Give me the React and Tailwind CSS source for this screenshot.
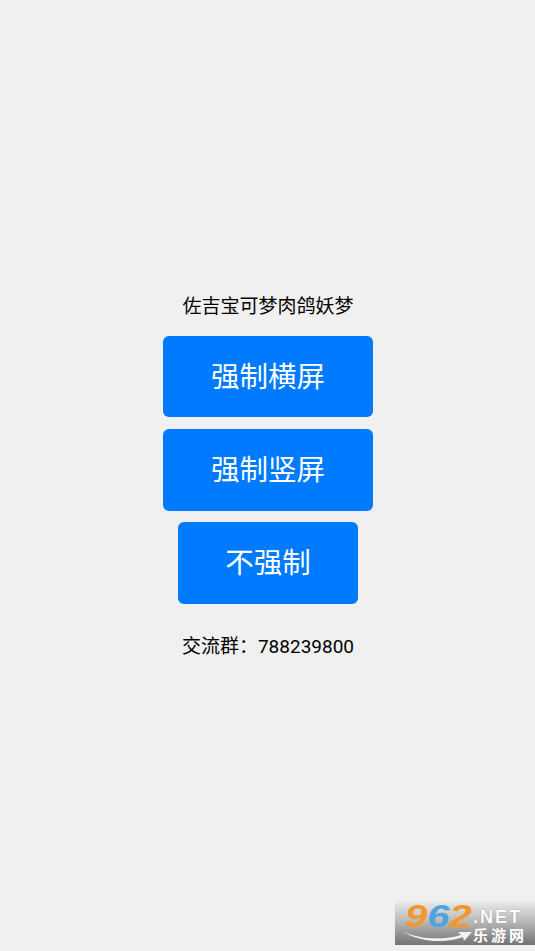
const font = { fontFamily: '"Roboto", "Noto Sans CJK SC", sans-serif' };
const btn = "h-[81.6px] rounded-[6px] bg-[#007aff] text-white text-[28.5px] pt-[3px]";

function Watermark() {
  return (
    <div className="absolute right-0 bottom-[6px] w-[140px] h-[44px] bg-gradient-to-b from-[#ececec] via-[#b4b4b4] to-[#747474]">
      <span
        className="absolute left-[10px] top-[0px] text-[32px] leading-[31px] font-bold italic text-[#f2982a] origin-left scale-x-[1.25] whitespace-nowrap"
        style={{ fontFamily: '"Liberation Sans", sans-serif' }}
      >
        9<span className="text-[#4fa3de]">6</span>2
      </span>
      <span
        className="absolute left-[78px] top-[5px] text-[18px] leading-[22px] font-bold text-white tracking-[2px] whitespace-nowrap"
        style={{ fontFamily: '"Liberation Sans", sans-serif', textShadow: "0 0 1px #777" }}
      >
        .NET
      </span>
      <span className="absolute left-[78px] top-[26px] text-[15px] leading-[18px] font-bold text-white tracking-[3px] whitespace-nowrap">
        乐游网
      </span>
      <svg className="absolute left-[6px] top-[29px]" width="72" height="13" viewBox="0 0 72 13">
        <path d="M1 1 C 18 10, 44 10, 60 5 L57 2 L71 2 L63 11 L62 7 C 44 14, 18 12, 1 1 Z" fill="#f2f2f2" />
      </svg>
    </div>
  );
}

export default function App() {
  return (
    <div className="relative h-[951px] w-full bg-[#f0f0f0] flex flex-col items-center pt-[292.5px] pl-[1px]" style={font}>
      <p className="text-[19px] leading-[28px] text-black">佐吉宝可梦肉鸽妖梦</p>
      <div className="mt-[15.2px] flex flex-col items-center gap-[11.8px]">
        <button className={`w-[209.5px] ${btn}`}>强制横屏</button>
        <button className={`w-[209.5px] ${btn}`}>强制竖屏</button>
        <button className={`w-[180.4px] ${btn}`}>不强制</button>
      </div>
      <p className="mt-[28.5px] text-[19px] leading-[28px] text-black">交流群：788239800</p>
      <Watermark />
    </div>
  );
}
